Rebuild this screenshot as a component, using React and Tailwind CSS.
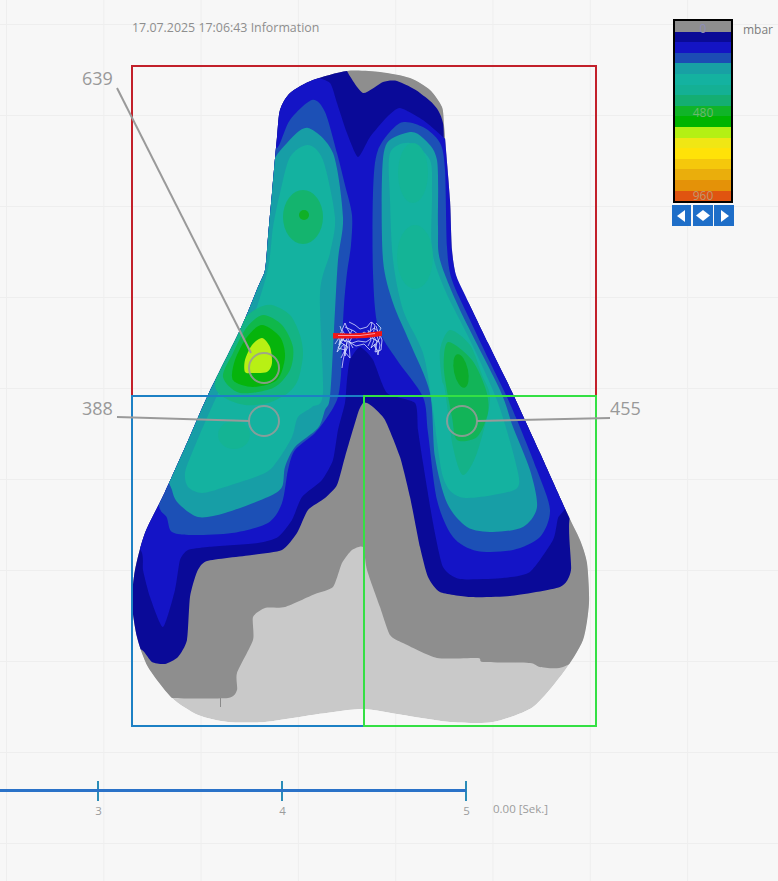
import React from "react";

function smooth(pts, k = 0.14) {
  const n = pts.length;
  let d = `M${pts[0][0]},${pts[0][1]}`;
  for (let i = 0; i < n; i++) {
    const p0 = pts[(i - 1 + n) % n], p1 = pts[i], p2 = pts[(i + 1) % n], p3 = pts[(i + 2) % n];
    const c1 = [p1[0] + (p2[0] - p0[0]) * k, p1[1] + (p2[1] - p0[1]) * k];
    const c2 = [p2[0] - (p3[0] - p1[0]) * k, p2[1] - (p3[1] - p1[1]) * k];
    d += `C${c1[0].toFixed(1)},${c1[1].toFixed(1)} ${c2[0].toFixed(1)},${c2[1].toFixed(1)} ${p2[0]},${p2[1]}`;
  }
  return d + "Z";
}

const outline = [[347,71],[380,72],[410,78],[430,90],[442,107],[444,125],[446,150],[450,200],[452,250],[456,275],[465,295],[488,343],[512,392],[540,453],[568,515],[580,540],[587,563],[589,603],[583,640],[563,673],[533,707],[493,722],[450,722],[403,715],[362,709],[312,715],[265,722],[228,722],[198,715],[172,698],[148,667],[137,637],[132,603],[135,570],[145,533],[165,492],[187,443],[208,395],[240,330],[258,287],[265,270],[268,237],[272,193],[277,137],[280,110],[290,93],[313,80]];
const darkGray = [[347,60],[450,60],[460,300],[600,520],[600,640],[563,667],[540,667],[530,663],[483,662],[478,658],[437,658],[403,643],[390,635],[380,607],[367,570],[363,547],[352,550],[342,563],[333,587],[315,594],[285,607],[265,608],[253,617],[253,640],[237,673],[237,690],[228,698],[172,698],[130,690],[120,600],[280,60]];
const navy = [[347,60],[347,71],[363,93],[383,82],[397,81],[420,93],[443,123],[455,280],[620,510],[571,515],[571,570],[560,587],[510,596],[470,597],[440,592],[428,577],[420,547],[410,497],[400,457],[385,420],[373,407],[367,403],[363,403],[358,413],[345,457],[337,485],[325,498],[308,510],[297,533],[282,550],[252,555],[207,561],[197,572],[190,597],[187,640],[178,657],[165,664],[152,662],[142,650],[120,640],[120,490],[260,60]];
const blue = [[270,120],[290,93],[313,78],[330,83],[337,103],[347,133],[358,157],[370,137],[387,117],[400,108],[423,120],[443,137],[456,150],[462,200],[465,260],[480,300],[525,392],[566,497],[558,518],[553,540],[530,572],[503,578],[460,579],[443,567],[433,523],[423,463],[418,430],[415,403],[387,393],[373,360],[360,347],[350,360],[347,380],[345,403],[338,430],[333,460],[322,480],[302,497],[292,520],[278,537],[258,543],[208,547],[188,550],[180,560],[175,590],[163,627],[150,597],[143,570],[142,553],[125,500],[200,380],[235,320],[250,270],[258,190]];
const medL = [[265,155],[278,147],[290,120],[312,100],[325,112],[337,153],[345,185],[352,215],[351,245],[347,273],[344,305],[342,345],[341,375],[338,397],[330,413],[315,433],[295,450],[288,470],[282,503],[268,523],[232,533],[192,535],[172,532],[167,518],[160,495],[200,390],[240,310],[258,240]];
const medR = [[400,123],[423,127],[440,143],[445,170],[447,247],[452,280],[470,320],[489,360],[507,397],[517,420],[537,470],[550,510],[540,537],[513,550],[477,551],[453,537],[437,500],[428,433],[423,397],[397,360],[378,327],[373,273],[373,193],[378,150]];
const tealL = [[308,128],[287,143],[270,170],[262,240],[250,290],[200,390],[168,465],[172,490],[178,503],[198,517],[225,513],[268,497],[282,487],[285,467],[295,447],[318,428],[325,410],[330,397],[334,330],[338,260],[343,217],[333,153]];
const tealL2 = [[308,145],[290,157],[280,193],[273,227],[267,273],[245,340],[215,400],[192,453],[185,473],[188,487],[202,493],[225,487],[265,473],[278,460],[292,437],[298,417],[312,407],[323,393],[320,293],[330,253],[335,217],[323,160]];
const tealR = [[410,132],[387,143],[382,177],[383,260],[393,303],[410,343],[430,393],[435,457],[447,503],[467,527],[493,532],[523,527],[537,507],[530,470],[513,427],[500,390],[460,310],[440,260],[438,227],[437,160],[423,138]];
const tealR2 = [[410,143],[390,153],[390,200],[393,260],[403,310],[423,353],[432,403],[443,477],[460,497],[493,495],[518,487],[515,460],[497,400],[470,340],[445,290],[432,250],[432,193],[430,160]];
const ll1 = [[272,305],[290,315],[300,335],[303,355],[298,380],[288,393],[268,403],[245,405],[225,398],[215,385],[225,350],[243,320],[258,308]];
const ll2 = [[263,315],[282,325],[293,347],[290,370],[273,388],[240,393],[223,377],[233,353],[247,327]];
const ll3 = [[262,325],[280,337],[285,357],[277,380],[253,387],[233,380],[235,360],[247,337]];
const yl = [[262,338],[270,347],[272,363],[267,372],[253,373],[245,372],[245,360],[252,345]];
const rl1 = [[450,330],[440,350],[442,380],[445,390],[453,447],[463,475],[477,453],[490,400],[482,375],[470,345]];
const rl2 = [[448,342],[444,370],[452,417],[457,440],[477,437],[488,413],[486,390],[472,360]];

const scribble = [
  "M341,332 L339,345 L342,338 L337,352 L344,344 L345,356 L347,342 L343,361 L342,368",
  "M345,323 L342,330 L346,336 L340,342 L348,347 L345,352 L350,358 L349,343 L352,337 L347,328 Z",
  "M349,322 L355,325 L360,329 L367,327 L371,322 L375,325",
  "M345,327 L354,331 L360,336 L368,333 L374,328 L378,331",
  "M343,340 L352,343 L358,341 L366,342 L372,338 L379,342",
  "M372,322 L370,332 L374,340 L371,348 L375,344 L378,355 L380,345 L377,336 L381,328 L376,323",
  "M375,325 L373,335 L377,342 L375,352 L381,350 L382,340 L379,332",
  "M335,344 L341,335 L345,342 L350,333 L357,338 L364,332 L372,337 L381,333",
  "M352,330 L348,339 L353,348 M368,330 L371,340 L368,346",
  "M340,326 L344,338 L338,348 L345,350 L341,358 M376,326 L380,338 L374,346 L379,352",
  "M346,340 L356,346 L364,344 L370,350",
];

const bands = ["#8e8e8e","#0a0a96","#1414c4","#1c4cb4","#18a0a4","#14b2a0","#14b094","#14ae72","#10b428","#00b400","#b4f014","#f0e614","#ffe208","#f5c80c","#eaae0c","#e49208","#e05410"];

function Tick({ label }) {
  return (
    <div className="flex w-[20px] flex-col items-center">
      <div className="h-[20px] w-[2px] bg-[#2a8cb8]" />
      <span className="ml-[1px] mt-[2px] text-[11.5px] leading-[16px] text-[#9c9c9c]">{label}</span>
    </div>
  );
}

export default function App() {
  return (
    <div className="relative w-[778px] h-[881px] overflow-hidden bg-[#f7f7f7] bg-[linear-gradient(to_right,#eeeeee_1px,transparent_1px),linear-gradient(to_bottom,#eeeeee_1px,transparent_1px)] bg-[size:97.3px_91px] bg-[position:6px_24px] font-['Open_Sans','Liberation_Sans',sans-serif]">
      <div className="flex items-start">
        <div className="w-[660px] shrink-0">
          <div className="h-[60px] pl-[132px] pt-[19px] text-[12.4px] leading-[18px] text-[#8e8e8e] font-medium">17.07.2025 17:06:43 Information</div>
          <div className="relative h-[680px]">
            <svg width="660" height="680" viewBox="0 60 660 680" className="block">
              <defs>
                <clipPath id="shape"><path d={smooth(outline, 0.12)} /></clipPath>
              </defs>
              <g clipPath="url(#shape)">
                <path d={smooth(outline, 0.12)} fill="#c9c9c9" />
                <path d={smooth(darkGray, 0.1)} fill="#8e8e8e" />
                <path d={smooth(navy, 0.1)} fill="#0a0a98" />
                <path d={smooth(blue, 0.1)} fill="#1414c6" />
                <path d={smooth(medL)} fill="#1c50b6" />
                <path d={smooth(medR)} fill="#1c50b6" />
                <path d={smooth(tealL)} fill="#179ea6" />
                <path d={smooth(tealR)} fill="#179ea6" />
                <path d={smooth(tealL2)} fill="#14b2a0" />
                <path d={smooth(tealR2)} fill="#14b2a0" />
                <ellipse cx="413" cy="173" rx="15" ry="30" fill="#14b496" />
                <ellipse cx="415" cy="257" rx="18" ry="32" fill="#14b496" />
                <ellipse cx="234" cy="435" rx="16" ry="14" fill="#14b494" />
                <ellipse cx="303" cy="217" rx="20" ry="27" fill="#14b46e" />
                <circle cx="304" cy="215" r="5" fill="#10b026" />
                <path d={smooth(ll1)} fill="#14b484" />
                <path d={smooth(ll2)} fill="#10b84a" />
                <path d={smooth(ll3)} fill="#06b40c" />
                <path d={smooth(yl)} fill="#b8f014" />
                <path d={smooth(rl1)} fill="#14b288" />
                <path d={smooth(rl2)} fill="#12b458" />
                <ellipse cx="461" cy="371" rx="7" ry="17" fill="#0cac2c" transform="rotate(-12 461 371)" />
              </g>
              <line x1="220.5" y1="698" x2="220.5" y2="707" stroke="#8a8a8a" strokeWidth="1" />
              <g fill="none" stroke="#d4dcff" strokeWidth="1" strokeOpacity="0.8">
                {scribble.map((d, i) => <path key={i} d={d} />)}
              </g>
              <path d="M333,333 L350,333.5 L368,332.5 L382,331 L382,336 L366,338 L350,338.5 L333,338.5 Z" fill="#f01616" />
              <path d="M338,335.5 L360,335.5 L375,333.5" fill="none" stroke="#ffb4c8" strokeWidth="0.8" />
              <rect x="132" y="66" width="464" height="330" fill="none" stroke="#c2202a" strokeWidth="2" />
              <rect x="132" y="396" width="232" height="330" fill="none" stroke="#1c80c4" strokeWidth="2" />
              <rect x="364" y="396" width="232" height="330" fill="none" stroke="#34e044" strokeWidth="2" />
              <g fill="none" stroke="#9a9a9a" strokeWidth="2">
                <line x1="117" y1="88" x2="251" y2="353" />
                <line x1="117" y1="417" x2="250" y2="421" />
                <line x1="610" y1="418" x2="477" y2="421" />
                <circle cx="264" cy="368" r="15" strokeOpacity="0.85" />
                <circle cx="264" cy="421" r="15" strokeOpacity="0.85" />
                <circle cx="462" cy="421" r="15" strokeOpacity="0.85" />
              </g>
            </svg>
            <span className="absolute left-[82px] top-[5px] text-[18px] leading-[26px] text-[#999999]">639</span>
            <span className="absolute left-[82px] top-[335px] text-[18px] leading-[26px] text-[#999999]">388</span>
            <span className="absolute left-[610px] top-[335px] text-[18px] leading-[26px] text-[#999999]">455</span>
          </div>
          <div className="relative mt-[41px] flex items-start pl-[88px]">
            <div className="absolute left-0 top-[8px] w-[466px] h-[3px] bg-[#2a72c8]" />
            <div className="flex gap-[164px]">
              <Tick label="3" />
              <Tick label="4" />
              <Tick label="5" />
            </div>
            <span className="ml-[17px] mt-[20px] text-[11.5px] leading-[16px] text-[#9c9c9c]">0.00 [Sek.]</span>
          </div>
        </div>
        <div className="ml-[12px] mt-[19px] flex items-start">
          <div>
            <div className="relative ml-[1px] w-[60px] h-[184px] border-2 border-black flex flex-col">
              {bands.map((c, i) => <div key={i} className="flex-1" style={{ backgroundColor: c }} />)}
              <div className="absolute inset-x-0 top-[0px] bottom-[-3px] flex flex-col items-center justify-between text-[12px] leading-[16px]">
                <span className="text-[#8d8db8]">0</span>
                <span className="text-[#6cb86c]">480</span>
                <span className="text-[#c0986c]">960</span>
              </div>
            </div>
            <div className="flex gap-[1px] mt-[2px]">
              <button className="mr-[1px] w-[19px] h-[21px] bg-[#1e6ec8] flex items-center justify-center">
                <svg width="9" height="12" viewBox="0 0 9 12"><path d="M8,0 L8,12 L0,6 Z" fill="#ffffff" /></svg>
              </button>
              <button className="w-[20px] h-[21px] bg-[#1e6ec8] flex items-center justify-center">
                <svg width="14" height="11" viewBox="0 0 14 11"><path d="M7,0 L14,5.5 L7,11 L0,5.5 Z" fill="#ffffff" /></svg>
              </button>
              <button className="w-[20px] h-[21px] bg-[#1e6ec8] flex items-center justify-center">
                <svg width="9" height="12" viewBox="0 0 9 12"><path d="M1,0 L1,12 L9,6 Z" fill="#ffffff" /></svg>
              </button>
            </div>
          </div>
          <span className="ml-[9px] mt-[2px] text-[12px] leading-[18px] text-[#7c7c7c]">mbar</span>
        </div>
      </div>
    </div>
  );
}
